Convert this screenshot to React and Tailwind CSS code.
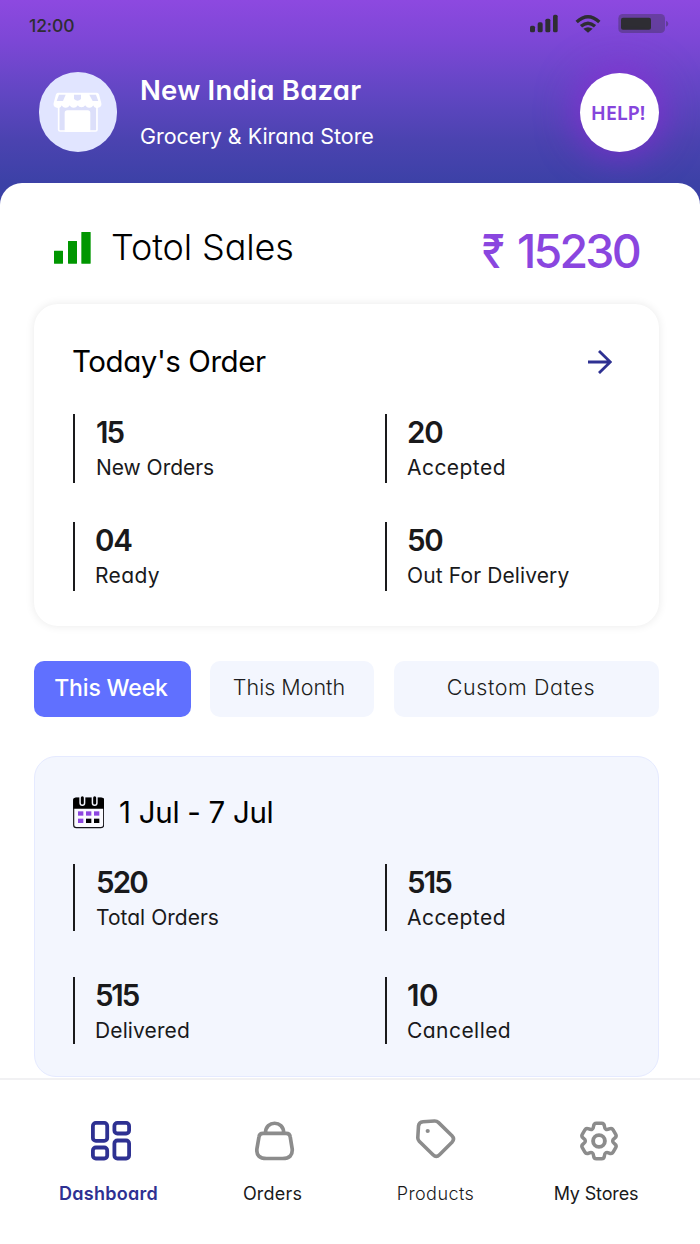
const GEAR = (() => {
  const tooth = [
    [-6.8, -11.8], [-5.9, -12.3], [-5.5, -13.5], [-5.4, -14.8], [-5.2, -17], [-4, -17.8], [-2.6, -17.8],
    [2.6, -17.8], [4, -17.8], [5.2, -17], [5.4, -14.8], [5.5, -13.5], [5.9, -12.3], [6.8, -11.8],
  ];
  let d = "";
  for (let i = 0; i < 6; i++) {
    const a = (i * Math.PI) / 3;
    const p = tooth.map(([x, y]) =>
      `${(x * Math.cos(a) - y * Math.sin(a)).toFixed(2)} ${(x * Math.sin(a) + y * Math.cos(a)).toFixed(2)}`
    );
    d += `${i ? "" : `M${p[0]}`}C${p[1]} ${p[2]} ${p[3]}C${p[4]} ${p[5]} ${p[6]}L${p[7]}C${p[8]} ${p[9]} ${p[10]}C${p[11]} ${p[12]} ${p[13]}`;
  }
  return d + "Z";
})();

function StatusIcons() {
  return (
    <div className="flex items-start text-[#2e2d33]">
      <svg className="mt-[14px] h-[19px] w-[28px]" viewBox="91 42 84 57" fill="currentColor">
        <rect x="91" y="77" width="15" height="20" rx="5" />
        <rect x="114" y="67" width="15" height="30" rx="5" />
        <rect x="137" y="56" width="15" height="41" rx="5" />
        <rect x="160" y="44" width="14" height="53" rx="5" />
      </svg>
      <svg className="ml-[17px] mt-[14px] h-[19px] w-[26px]" viewBox="226 42 78 57" fill="none" stroke="currentColor" strokeWidth="10">
        <path d="M231 66Q265 34 299 66" />
        <path d="M244 79Q265 60 286 79" />
        <path d="M265 98L251 86Q265 77 279 86Z" fill="currentColor" stroke="none" />
      </svg>
      <svg className="ml-[17px] mt-[14px] h-[19px] w-[51px]" viewBox="354 42 153 57" fill="currentColor">
        <rect x="355" y="42" width="140" height="57" rx="13" opacity="0.35" />
        <rect x="363" y="53" width="90" height="36" rx="6" />
        <path d="M498 62Q505 65 505 71Q505 77 498 80Z" opacity="0.4" />
      </svg>
    </div>
  );
}

function StoreIcon() {
  return (
    <svg className="h-[40.7px] w-[49.3px]" viewBox="28 37 148 122">
      <rect x="45" y="75" width="115" height="79" rx="4" fill="#dcdffa" stroke="#fff" strokeWidth="5" />
      <path d="M63 157V100Q63 92 71 92H132Q140 92 140 100V157Z" fill="#fff" />
      <path d="M43 39H160Q164 39 166 44L173 70A11.5 11.5 0 0 1 149 75A12.5 12.5 0 0 1 125 75A12.5 12.5 0 0 1 102 75A12.5 12.5 0 0 1 78 75A12.5 12.5 0 0 1 54 75A11.5 11.5 0 0 1 30 70L37 44Q39 39 43 39Z" fill="#fff" />
      <path d="M46 45H66L58 64H39ZM91 45H112V58Q102 68 91 58ZM137 45H157L164 64H147Z" fill="#dcdffa" />
    </svg>
  );
}

function CalendarIcon() {
  return (
    <svg className="h-[33px] w-[31px]" viewBox="39 33 93 99">
      <rect x="41" y="39" width="90" height="89" rx="8" fill="#fafaff" stroke="#15141a" strokeWidth="3.5" />
      <path d="M39.500 71V45Q39.500 38 47 38H125Q132.500 38 132.500 45V71Z" fill="#000" />
      <path d="M67 36V54M104 36V54" stroke="#f3f5fe" strokeWidth="18" strokeLinecap="round" />
      <path d="M67 38V54M104 38V54" stroke="#000" strokeWidth="9" strokeLinecap="round" />
      <g fill="#8d46e0">
        <rect x="54" y="79" width="16" height="13" />
        <rect x="78" y="79" width="16" height="13" />
        <rect x="102" y="79" width="16" height="13" />
        <rect x="54" y="101" width="16" height="13" />
      </g>
      <rect x="78" y="101" width="16" height="13" />
      <rect x="102" y="101" width="16" height="13" />
    </svg>
  );
}

function Stat({ value, label, tracking, height, indent = "pl-[20px]", valueTracking = "tracking-[-1.2px]" }) {
  return (
    <div className={`flex flex-col border-l-2 border-[#1a1a1c] pt-[4px] leading-none text-[#19191b] ${height} ${indent}`}>
      <span className={`text-[29.5px] font-semibold leading-[29px] ${valueTracking}`}>{value}</span>
      <span className={`mt-[10px] whitespace-nowrap text-[21px] leading-[21px] ${tracking}`}>{label}</span>
    </div>
  );
}

function NavItem({ icon, label, iconClass, labelClass }) {
  return (
    <div className="flex w-[163px] flex-col items-center">
      <div className={`flex h-[41px] w-[41px] ${iconClass}`}>{icon}</div>
      <span className={`mt-[23px] whitespace-nowrap text-[18px] leading-[18px] ${labelClass}`}>{label}</span>
    </div>
  );
}

export default function App() {
  return (
    <div className="flex h-[1244px] w-[700px] flex-col overflow-hidden bg-[linear-gradient(180deg,#8d49e0_0px,#7d47d6_40px,#6046c2_95px,#4b43b0_140px,#3b41a6_185px,#3b41a6_210px)] text-black [font-family:Inter,sans-serif] [font-feature-settings:'cv11']">
      <header className="flex h-[183px] flex-col">
        <div className="flex h-[72px] justify-between pl-[29px] pr-[31px]">
          <span className="pt-[17px] text-[17.500px] font-medium leading-[17.500px] tracking-[-0.1px] text-[#2e2d33]">12:00</span>
          <StatusIcons />
        </div>
        <div className="flex items-start pl-[39px] pr-[41px]">
          <div className="flex h-[80px] w-[78px] items-center justify-center rounded-full bg-[#e1e5ff]">
            <StoreIcon />
          </div>
          <div className="ml-[23px] flex flex-1 flex-col pt-[4px] leading-none text-white">
            <span className="text-[27.5px] font-semibold leading-[28px] tracking-[0.22px]">New India Bazar</span>
            <span className="mt-[21px] text-[21.5px] leading-[22px] tracking-[-0.03px]">Grocery &amp; Kirana Store</span>
          </div>
          <div className="mt-[1px] flex h-[79px] w-[79px] items-center justify-center rounded-full bg-white pr-[3px] text-[20px] font-semibold tracking-[-0.1px] text-[#8645dc] shadow-[0_0_36px_6px_rgba(146,38,214,0.65)] [font-family:'Noto_Sans',sans-serif]">
            HELP!
          </div>
        </div>
      </header>

      <main className="relative flex h-[895px] flex-col rounded-t-[22px] bg-white">
        <div className="flex h-[121px] items-start justify-between pl-[54px] pr-[61px]">
          <div className="flex items-start">
            <svg className="mt-[49px] h-[32px] w-[37px]" viewBox="72 66 111 96" fill="#009600">
              <rect x="72" y="122" width="27" height="39" rx="1" />
              <rect x="114" y="93" width="27" height="68" rx="1" />
              <rect x="154" y="66" width="28" height="95" rx="1" />
            </svg>
            <span className="ml-[20px] mt-[46px] text-[36px] font-light leading-[36px] tracking-[-0.12px]">Totol Sales</span>
          </div>
          <div className="mt-[45px] flex text-[46.500px] font-medium leading-[46px] text-[#8a46df]">
            <span className="w-[24px]"><span className="inline-block origin-left scale-x-[0.88]">₹</span></span>
            <span className="ml-[11px] w-[122px] whitespace-nowrap tracking-[-2.800px]">15230</span>
          </div>
        </div>

        <section className="ml-[34px] mr-[41px] flex h-[322px] flex-col rounded-[24px] bg-white pl-[39px] pr-[47px] shadow-[0_0_10px_rgba(0,0,0,0.09)]">
          <div className="flex h-[110px] items-start justify-between">
            <span className="-ml-[1px] mt-[42px] text-[29.5px] leading-[30px] tracking-[-0.44px]">Today's Order</span>
            <svg className="mt-[46px] h-[24px] w-[24px]" viewBox="444 419 72 72" fill="none" stroke="#2e3192" strokeWidth="8.500">
              <path d="M444 455H511M477 422L511 455L477 488" />
            </svg>
          </div>
          <div className="grid grid-cols-[312px_1fr] gap-y-[39px]">
            <Stat value="15" label="New Orders" height="h-[69px]" indent="pl-[21px]" tracking="tracking-[-0.04px]" valueTracking="tracking-[-2px]" />
            <Stat value="20" label="Accepted" height="h-[69px]" tracking="tracking-[0.45px]" />
            <Stat value="04" label="Ready" height="h-[69px]" tracking="tracking-[0.4px]" />
            <Stat value="50" label="Out For Delivery" height="h-[69px]" tracking="tracking-[0.12px]" />
          </div>
        </section>

        <div className="mt-[35px] flex h-[56px] pl-[34px] pr-[41px] leading-none">
          <div className="flex w-[157px] justify-center rounded-[10px] bg-[#6070ff] pr-[3px] pt-[16px] text-[23px] font-medium leading-[23px] tracking-[-0.15px] text-white">This Week</div>
          <div className="ml-[19px] flex w-[164px] justify-center rounded-[10px] bg-[#f3f6fe] pr-[6px] pt-[15.500px] text-[21.500px] font-light leading-[21.500px] text-[#1d1d20]">This Month</div>
          <div className="ml-[20px] flex w-[265px] justify-center rounded-[10px] bg-[#f3f6fe] pr-[11px] pt-[15.500px] text-[21.500px] font-light leading-[21.500px] tracking-[0.58px] text-[#1d1d20]">Custom Dates</div>
        </div>

        <section className="ml-[34px] mr-[41px] mt-[39px] flex h-[321px] flex-col rounded-[22px] border border-[#e5eaff] bg-[#f3f6fe] pl-[38px]">
          <div className="flex h-[107px] items-start">
            <div className="mt-[39px]"><CalendarIcon /></div>
            <span className="ml-[15px] mt-[40px] text-[29.5px] leading-[30px] tracking-[-0.3px]">1 Jul - 7 Jul</span>
          </div>
          <div className="grid grid-cols-[312px_1fr] gap-y-[46px]">
            <Stat value="520" label="Total Orders" height="h-[67px]" indent="pl-[21px]" tracking="tracking-[0.02px]" valueTracking="tracking-[-1.9px]" />
            <Stat value="515" label="Accepted" height="h-[67px]" tracking="tracking-[0.45px]" valueTracking="tracking-[-1.9px]" />
            <Stat value="515" label="Delivered" height="h-[67px]" tracking="tracking-[0.12px]" valueTracking="tracking-[-2.2px]" />
            <Stat value="10" label="Cancelled" height="h-[67px]" tracking="tracking-[0.45px]" valueTracking="tracking-[-0.5px]" />
          </div>
        </section>
      </main>

      <nav className="flex h-[166px] items-start border-t-2 border-[#f1f1f3] bg-white pl-[27px] pt-[41px]">
        <NavItem
          label="Dashboard"
          iconClass="ml-[5px]"
          labelClass="font-semibold text-[#2e3192] tracking-[0.3px]"
          icon={
            <svg className="h-[40px] w-[40px]" viewBox="0 0 40 40" fill="none" stroke="#2e3192" strokeWidth="3.8">
              <rect x="1.9" y="1.9" width="14.300" height="18" rx="3" />
              <rect x="23.400" y="1.9" width="14.700" height="10.600" rx="3" />
              <rect x="1.9" y="26.500" width="14.300" height="11" rx="3" />
              <rect x="23.400" y="19.500" width="14.700" height="18" rx="3" />
            </svg>
          }
        />
        <NavItem
          label="Orders"
          iconClass="ml-[7px]"
          labelClass="pl-[2px] text-[#19191b] tracking-[0.19px]"
          icon={
            <svg className="h-[40px] w-[40px]" viewBox="0 0 40 40" fill="none" stroke="#8c8c8c" strokeWidth="3.7">
              <path d="M8 12.300H31.200Q34.800 12.300 35.200 15.800L37.200 28Q38 37.500 27.500 37.500H11.500Q1 37.500 1.900 28L4 15.800Q4.500 12.300 8 12.300Z" />
              <path d="M10.500 12C10.500 -1 28.700 -1 28.700 12" />
            </svg>
          }
        />
        <NavItem
          label="Products"
          iconClass="ml-[3px]"
          labelClass="pl-[2px] font-light text-[#19191b] tracking-[0.45px]"
          icon={
            <svg className="-mt-[2px] h-[40px] w-[40px]" viewBox="0 0 40 40" fill="none" stroke="#8c8c8c" strokeWidth="3.6" strokeLinejoin="round">
              <path d="M7 2.800L18.500 2Q20.800 1.900 22.600 3.600L36 16.800Q39 20 36 23.200L23.500 35.800Q20.300 39 17 35.800L3.200 22.300Q1.700 20.800 1.800 18.500L2.500 7Q2.900 3.100 7 2.800Z" />
              <circle cx="11.700" cy="12" r="2.100" fill="#8c8c8c" stroke="none" />
            </svg>
          }
        />
        <NavItem
          label="My Stores"
          iconClass="ml-[3px]"
          labelClass="text-[#19191b] tracking-[-0.15px] pr-[3px]"
          icon={
            <svg className="h-[40px] w-[40px]" viewBox="-20 -20 40 40" fill="none" stroke="#8c8c8c" strokeWidth="3.5" strokeLinejoin="round">
              <path d={GEAR} />
              <circle r="5.900" strokeWidth="3.900" />
            </svg>
          }
        />
      </nav>
    </div>
  );
}
